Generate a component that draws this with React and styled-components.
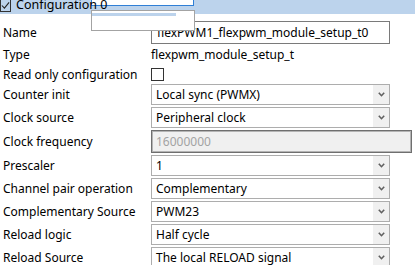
import React from 'react';
import styled, { createGlobalStyle } from 'styled-components';

const GlobalStyle = createGlobalStyle`
  body {
    margin: 0;
    background: #ffffff;
    font-family: 'Noto Sans', 'Liberation Sans', sans-serif;
    font-size: 12px;
    color: #000000;
    overflow: hidden;
  }
`;

const Page = styled.div`
  width: 415px;
  height: 265px;
  overflow: hidden;
`;

const Header = styled.div`
  position: relative;
  display: flex;
  align-items: flex-end;
  gap: 5px;
  height: 14px;
  background: #bcd3ec;
`;

const HeaderCheck = styled.span`
  position: relative;
  z-index: 2;
  width: 11px;
  height: 12px;
  margin-bottom: 2px;
  border: 1px solid #333333;
  border-top: none;
  box-sizing: border-box;
  display: flex;
  align-items: center;
  justify-content: center;
`;

const HeaderTitle = styled.span`
  position: relative;
  z-index: 2;
  line-height: 14px;
  font-size: 12.5px;
  margin-bottom: 2px;
  white-space: nowrap;
`;

const FocusBox = styled.div`
  position: absolute;
  z-index: 1;
  left: 91px;
  top: -3px;
  width: 103px;
  height: 9px;
  box-sizing: border-box;
  border: 1px solid #2f7fd6;
  background: #ffffff;
`;

const PopupBox = styled.div`
  position: absolute;
  z-index: 3;
  left: 91px;
  top: 10px;
  width: 104px;
  height: 21px;
  box-sizing: border-box;
  border: 1px solid #a3a3a3;
  background: #ffffff;
  padding-top: 2px;
`;

const PopupStripe = styled.div`
  width: 84px;
  height: 3px;
  background: #bcd3ec;
`;

const Form = styled.div`
  margin-top: 7px;
`;

const Row = styled.div`
  display: grid;
  grid-template-columns: 148px auto;
  align-items: center;
  height: ${(p) => p.$h}px;
  margin-bottom: ${(p) => p.$gap || 0}px;
  padding-left: 3px;
`;

const Label = styled.span`
  white-space: nowrap;
`;

const TextField = styled.div`
  box-sizing: border-box;
  width: ${(p) => p.$w || 239}px;
  height: 100%;
  display: flex;
  align-items: center;
  padding-left: ${(p) => p.$pad || 5}px;
  border: 1px solid ${(p) => (p.$disabled ? '#6f6f6f' : '#7a7a7a')};
  background: ${(p) => (p.$disabled ? '#f0f0f0' : '#ffffff')};
  color: ${(p) => (p.$disabled ? '#a3a3a3' : '#000000')};
  box-shadow: ${(p) => (p.$disabled ? 'inset 0 0 0 1px #b4b4b4' : 'none')};
  white-space: nowrap;
`;

const PlainValue = styled.span`
  white-space: nowrap;
`;

const CheckBox = styled.span`
  display: block;
  width: 13px;
  height: 13px;
  box-sizing: border-box;
  border: 1px solid #333333;
  background: #ffffff;
`;

const Select = styled.div`
  box-sizing: border-box;
  width: 239px;
  height: 100%;
  display: flex;
  align-items: stretch;
  border: 1px solid #adadad;
  background: #ffffff;
`;

const SelectText = styled.span`
  flex: 1;
  display: flex;
  align-items: center;
  padding-left: 4px;
  white-space: nowrap;
`;

const Arrow = styled.span`
  width: 16px;
  background: #f0f0f0;
  display: flex;
  align-items: center;
  justify-content: center;
`;

function Chevron() {
  return (
    <svg width="7" height="5" viewBox="0 0 7 5">
      <polyline points="0.8,0.8 3.5,3.7 6.2,0.8" fill="none" stroke="#606060" strokeWidth="1.6" />
    </svg>
  );
}

function Dropdown({ value }) {
  return (
    <Select>
      <SelectText>{value}</SelectText>
      <Arrow>
        <Chevron />
      </Arrow>
    </Select>
  );
}

const selects = [
  ['Counter init', 'Local sync (PWMX)'],
  ['Clock source', 'Peripheral clock'],
];

const selects2 = [
  ['Prescaler', '1'],
  ['Channel pair operation', 'Complementary'],
  ['Complementary Source', 'PWM23'],
  ['Reload logic', 'Half cycle'],
  ['Reload Source', 'The local RELOAD signal'],
];

export default function App() {
  return (
    <Page>
      <GlobalStyle />
      <Header>
        <HeaderCheck>
          <svg width="10" height="9" viewBox="0 0 10 9">
            <polyline points="1,4.5 3.8,7.5 9,1" fill="none" stroke="#222" strokeWidth="1.2" />
          </svg>
        </HeaderCheck>
        <HeaderTitle>Configuration 0</HeaderTitle>
        <FocusBox />
        <PopupBox>
          <PopupStripe />
        </PopupBox>
      </Header>
      <Form>
        <Row $h={23}>
          <Label>Name</Label>
          <TextField>flexPWM1_flexpwm_module_setup_t0</TextField>
        </Row>
        <Row $h={21}>
          <Label>Type</Label>
          <PlainValue>flexpwm_module_setup_t</PlainValue>
        </Row>
        <Row $h={19}>
          <Label>Read only configuration</Label>
          <CheckBox />
        </Row>
        {selects.map(([label, value]) => (
          <Row key={label} $h={21} $gap={2}>
            <Label>{label}</Label>
            <Dropdown value={value} />
          </Row>
        ))}
        <Row $h={23} $gap={2}>
          <Label>Clock frequency</Label>
          <TextField $disabled $w={261} $pad={4}>16000000</TextField>
        </Row>
        {selects2.map(([label, value]) => (
          <Row key={label} $h={21} $gap={2}>
            <Label>{label}</Label>
            <Dropdown value={value} />
          </Row>
        ))}
      </Form>
    </Page>
  );
}
